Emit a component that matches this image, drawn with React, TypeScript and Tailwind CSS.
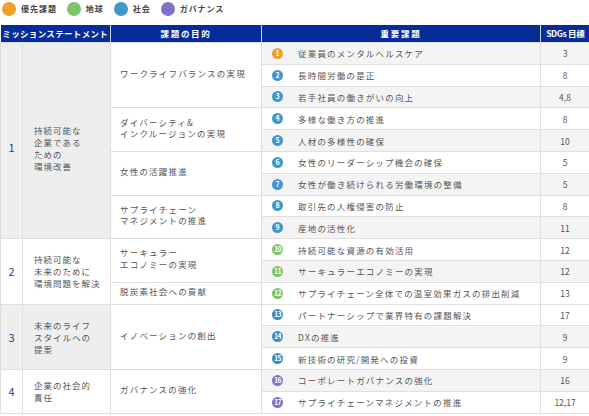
const font = { fontFamily: '"Noto Sans CJK JP", "Noto Sans", sans-serif' };

type Issue = { n: number; text: string; sdg: string; color: string; gray: boolean };

const ORANGE = 'bg-[#eba12a]';
const TEAL = 'bg-[#3f97cc]';
const GREEN = 'bg-[#7dc46c]';
const BLUE = 'bg-[#3a8cc4]';
const PURPLE = 'bg-[#7f72c2]';

const issues: Issue[] = [
  { n: 1, text: '従業員のメンタルヘルスケア', sdg: '3', color: ORANGE, gray: true },
  { n: 2, text: '長時間労働の是正', sdg: '8', color: TEAL, gray: false },
  { n: 3, text: '若手社員の働きがいの向上', sdg: '4,8', color: TEAL, gray: true },
  { n: 4, text: '多様な働き方の推進', sdg: '8', color: TEAL, gray: false },
  { n: 5, text: '人材の多様性の確保', sdg: '10', color: TEAL, gray: true },
  { n: 6, text: '女性のリーダーシップ機会の確保', sdg: '5', color: TEAL, gray: false },
  { n: 7, text: '女性が働き続けられる労働環境の整備', sdg: '5', color: TEAL, gray: true },
  { n: 8, text: '取引先の人権侵害の防止', sdg: '8', color: TEAL, gray: false },
  { n: 9, text: '産地の活性化', sdg: '11', color: TEAL, gray: true },
  { n: 10, text: '持続可能な資源の有効活用', sdg: '12', color: GREEN, gray: false },
  { n: 11, text: 'サーキュラーエコノミーの実現', sdg: '12', color: GREEN, gray: true },
  { n: 12, text: 'サプライチェーン全体での温室効果ガスの排出削減', sdg: '13', color: GREEN, gray: false },
  { n: 13, text: 'パートナーシップで業界特有の課題解決', sdg: '17', color: BLUE, gray: false },
  { n: 14, text: 'DXの推進', sdg: '9', color: BLUE, gray: true },
  { n: 15, text: '新技術の研究/開発への投資', sdg: '9', color: BLUE, gray: false },
  { n: 16, text: 'コーポレートガバナンスの強化', sdg: '16', color: PURPLE, gray: true },
  { n: 17, text: 'サプライチェーンマネジメントの推進', sdg: '12,17', color: PURPLE, gray: false },
];

// mission groups start at issue index
const missions: Record<number, { no: string; lines: string[]; span: number; gray: boolean; pad: string }> = {
  1: { no: '1', lines: ['持続可能な', '企業である', 'ための', '環境改善'], span: 9, gray: true, pad: 'pt-[14px]' },
  10: { no: '2', lines: ['持続可能な', '未来のために', '環境問題を解決'], span: 3, gray: false, pad: 'pt-0' },
  13: { no: '3', lines: ['未来のライフ', 'スタイルへの', '提案'], span: 3, gray: true, pad: 'pt-0' },
  16: { no: '4', lines: ['企業の社会的', '責任'], span: 2, gray: false, pad: 'pt-0' },
};

const purposes: Record<number, { lines: string[]; span: number }> = {
  1: { lines: ['ワークライフバランスの実現'], span: 3 },
  4: { lines: ['ダイバーシティ&', 'インクルージョンの実現'], span: 2 },
  6: { lines: ['女性の活躍推進'], span: 2 },
  8: { lines: ['サプライチェーン', 'マネジメントの推進'], span: 2 },
  10: { lines: ['サーキュラー', 'エコノミーの実現'], span: 2 },
  12: { lines: ['脱炭素社会への貢献'], span: 1 },
  13: { lines: ['イノベーションの創出'], span: 3 },
  16: { lines: ['ガバナンスの強化'], span: 2 },
};

function Badge({ n, color }: { n: number; color: string }) {
  return (
    <span
      className={`${color} inline-flex h-[11px] w-[11px] shrink-0 items-center justify-center rounded-full text-[7px] font-bold leading-none text-white ${n > 9 ? 'tracking-[-0.08em]' : ''}`}
    >
      {n}
    </span>
  );
}

const legend = [
  { label: '優先課題', color: ORANGE },
  { label: '地球', color: GREEN },
  { label: '社会', color: TEAL },
  { label: 'ガバナンス', color: PURPLE },
];

export default function App() {
  return (
    <div className="h-[416px] w-[589px] overflow-hidden bg-white text-[#555]" style={font}>
      <div className="flex h-[25px] items-start gap-[10px] pl-[2px] pt-[2px]">
        {legend.map((l) => (
          <div key={l.label} className="flex items-center gap-[5px]">
            <span className={`${l.color} h-[14px] w-[14px] rounded-full`} />
            <span className="text-[8px] font-bold tracking-[0.12em] text-[#444]">{l.label}</span>
          </div>
        ))}
      </div>

      <table className="w-[589px] table-fixed border-collapse">
        <colgroup>
          <col className="w-[22px]" />
          <col className="w-[88px]" />
          <col className="w-[151px]" />
          <col className="w-[279px]" />
          <col className="w-[49px]" />
        </colgroup>
        <thead>
          <tr className="h-[17px] bg-[#062c9a] text-[8.5px] font-bold leading-[17px] text-white">
            <th colSpan={2} className="whitespace-nowrap border-r border-[#c8d2ee] p-0 tracking-[0.04em]">ミッションステートメント</th>
            <th className="whitespace-nowrap border-r border-[#c8d2ee] p-0 tracking-[0.2em]">課題の目的</th>
            <th className="whitespace-nowrap border-r border-[#c8d2ee] p-0 tracking-[0.2em]">重要課題</th>
            <th className="whitespace-nowrap p-0 tracking-[-0.04em]">SDGs 目標</th>
          </tr>
        </thead>
        <tbody>
          {issues.map((it) => {
            const m = missions[it.n];
            const p = purposes[it.n];
            return (
              <tr key={it.n} className="h-[21.8px]">
                {m && (
                  <>
                    <td
                      rowSpan={m.span}
                      className={`${m.gray ? 'bg-[#eeeeee]' : 'bg-white'} ${m.pad} border border-[#dedede] pb-0 text-center align-middle text-[11px] text-[#223a8a]`}
                    >
                      {m.no}
                    </td>
                    <td
                      rowSpan={m.span}
                      className={`${m.gray ? 'bg-[#eeeeee]' : 'bg-white'} ${m.pad} border border-[#dedede] pb-0 pl-[11px] pr-0 align-middle text-[8.5px] leading-[12px] tracking-[0.12em]`}
                    >
                      {m.lines.map((l) => (
                        <div key={l} className="whitespace-nowrap">{l}</div>
                      ))}
                    </td>
                  </>
                )}
                {p && (
                  <td
                    rowSpan={p.span}
                    className="border border-[#dedede] bg-white py-0 pl-[9px] pr-0 align-middle text-[8.5px] leading-[11.5px] tracking-[0.14em]"
                  >
                    <div className="-mt-[3px]">
                      {p.lines.map((l) => (
                        <div key={l} className="whitespace-nowrap">{l}</div>
                      ))}
                    </div>
                  </td>
                )}
                <td className={`${it.gray ? 'bg-[#f4f4f4]' : 'bg-white'} border-y border-[#e0e0e0] p-0`}>
                  <div className="flex items-center gap-[15px] pl-[10px]">
                    <Badge n={it.n} color={it.color} />
                    <span className="whitespace-nowrap text-[8.5px] leading-[12px] tracking-[0.14em]">{it.text}</span>
                  </div>
                </td>
                <td className={`${it.gray ? 'bg-[#f4f4f4]' : 'bg-white'} border border-[#e0e0e0] p-0 text-center text-[8.5px] leading-[12px]`}>
                  {it.sdg}
                </td>
              </tr>
            );
          })}
        </tbody>
      </table>
    </div>
  );
}
